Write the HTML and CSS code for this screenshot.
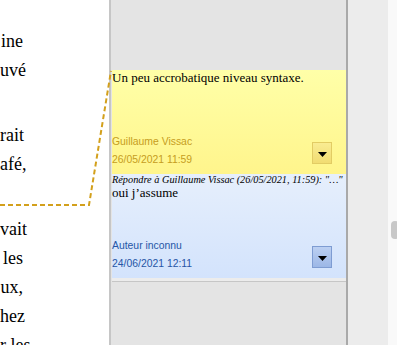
FILE: index.html
```html
<!DOCTYPE html>
<html lang="fr">
<head>
<meta charset="UTF-8">
<title>Commentaires</title>
<link rel="stylesheet" href="styles.css">
</head>
<body>
<div class="window">

<div class="page">
<div class="text-col">
<p>
<span class="line">ine</span>
<span class="line">uvé</span>
</p>
<p>
<span class="line">rait</span>
<span class="line">afé,</span>
</p>
<p>
<span class="line">vait</span>
<span class="line">les</span>
<span class="line">ux,</span>
<span class="line">hez</span>
<span class="line">r les</span>
</p>
</div>
</div>

<aside class="sidebar">
<div class="comment note-yellow">
<div class="comment-text">Un peu accrobatique niveau syntaxe.</div>
<div class="comment-foot">
<div class="meta">
<div class="author">Guillaume Vissac</div>
<div class="date">26/05/2021 11:59</div>
</div>
<button class="menu-btn"><svg width="9" height="5" viewBox="0 0 9 5"><polygon points="0,0 9,0 4.5,5" fill="#000"/></svg></button>
</div>
</div>

<div class="comment note-blue">
<div class="reply-to">Répondre à Guillaume Vissac (26/05/2021, 11:59): "…"</div>
<div class="comment-text">oui j’assume</div>
<div class="comment-foot">
<div class="meta">
<div class="author">Auteur inconnu</div>
<div class="date">24/06/2021 12:11</div>
</div>
<button class="menu-btn"><svg width="9" height="5" viewBox="0 0 9 5"><polygon points="0,0 9,0 4.5,5" fill="#000"/></svg></button>
</div>
</div>
<div class="thread-end"></div>
</aside>

<div class="side-panel"></div>
<div class="scroll-track"><div class="scroll-thumb"></div></div>

<!-- anchor line from the text to the comment -->
<svg class="anchor" width="397" height="345" viewBox="0 0 397 345">
<path d="M0 205 H89 L111 71" fill="none" stroke="#d3a01c" stroke-width="2" stroke-dasharray="5 3"/>
</svg>

</div>
</body>
</html>
```

FILE: styles.css
```css
html, body
{
margin: 0;
padding: 0;
width: 100%;
height: 100%;
overflow: hidden;
}

body
{
font-family: "Liberation Serif", serif;
}

.window
{
position: relative;
display: flex;
height: 345px;
width: 397px;
overflow: hidden;
}

.page
{
width: 109px;
background: #fff;
border-right: 2px solid #c6c6c6;
flex: none;
}

.text-col
{
width: 23px;
padding-top: 27px;
}

.text-col p
{
margin: 0 0 36px 0;
}

.line
{
display: block;
text-align: right;
white-space: nowrap;
font-size: 18px;
line-height: 29px;
color: #000;
}

.sidebar
{
width: 234px;
padding: 70px 0 0 1px;
background: #e4e4e4;
border-right: 2px solid #a9a9a9;
flex: none;
}

.comment
{
display: flex;
flex-direction: column;
height: 104px;
box-sizing: border-box;
padding-bottom: 5px;
}

.note-yellow
{
background: linear-gradient(#ffffa8, #fff58c);
}

.note-blue
{
background: linear-gradient(#e6effc, #d3e3fc);
}

.comment-text
{
font-size: 13px;
color: #000;
}

.reply-to
{
font-size: 10.3px;
font-style: italic;
line-height: 11px;
white-space: nowrap;
color: #000;
}

.comment-foot
{
margin-top: auto;
display: flex;
align-items: flex-end;
justify-content: space-between;
}

.meta
{
font-family: "Liberation Sans", sans-serif;
font-size: 10.4px;
line-height: 18px;
}

.note-yellow .meta
{
color: #c69d1e;
}

.note-blue .meta
{
color: #2656a6;
}

.menu-btn
{
width: 20px;
height: 22px;
margin: 0 14px 5px 0;
padding: 2px 0 0 0;
box-sizing: border-box;
display: flex;
align-items: center;
justify-content: center;
cursor: pointer;
}

.note-yellow .menu-btn
{
background: linear-gradient(#f9ec92, #f1dc72);
border: 1px solid #e2cc64;
}

.note-blue .menu-btn
{
background: linear-gradient(#bcd0f2, #9cb7e6);
border: 1px solid #7e9cd2;
}

.thread-end
{
height: 3px;
background: #ececec;
border-bottom: 1px solid #c6c6c6;
}

.side-panel
{
width: 40px;
background: #ececec;
flex: none;
}

.scroll-track
{
position: relative;
width: 9px;
background: #f9f9f9;
flex: none;
}

.scroll-thumb
{
position: absolute;
left: 3px;
top: 221px;
width: 8px;
height: 18px;
border-radius: 4px;
background: #c8c8c8;
}

.anchor
{
position: absolute;
left: 0;
top: 0;
pointer-events: none;
}
```
